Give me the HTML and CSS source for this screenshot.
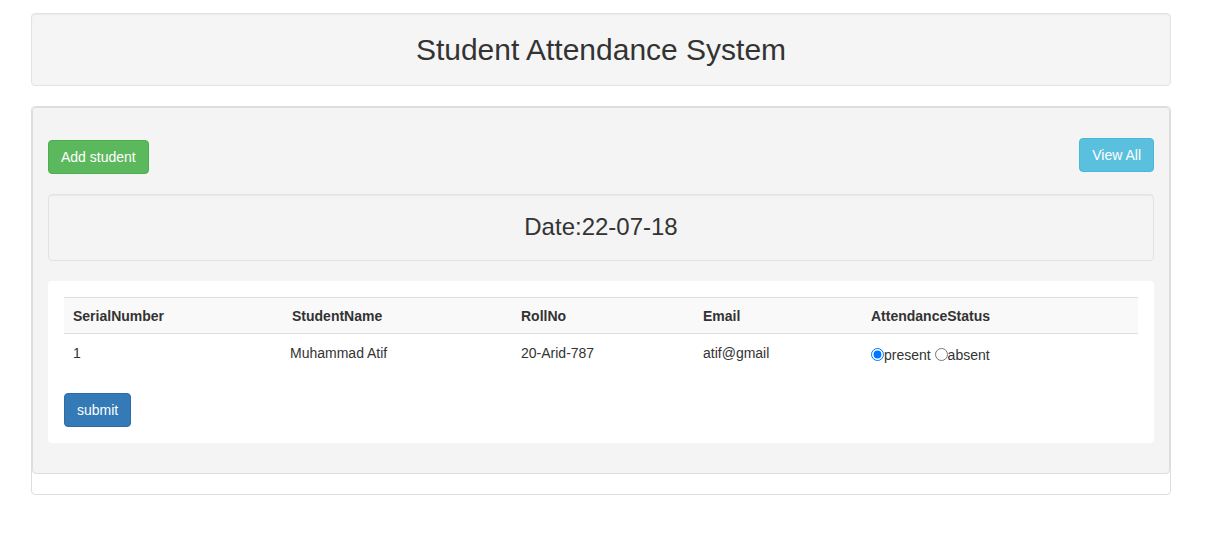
FILE: index.html
```html
<!DOCTYPE html>
<html>
<head>
<meta charset="utf-8">
<link rel="stylesheet" href="styles.css">
</head>
<body>
<div class="page">
  <div class="well header-well">
    <h1 class="title">Student Attendance System</h1>
  </div>
  <div class="outer-panel">
    <div class="well main-well">
      <div class="btn-row">
        <button class="btn btn-success add-btn">Add student</button>
        <button class="btn btn-info">View All</button>
      </div>
      <div class="well date-well">
        <h3 class="date">Date:22-07-18</h3>
      </div>
      <div class="white-panel">
        <table class="table">
          <thead>
            <tr>
              <th class="c1">SerialNumber</th>
              <th class="c2">StudentName</th>
              <th class="c3">RollNo</th>
              <th class="c4">Email</th>
              <th class="c5">AttendanceStatus</th>
            </tr>
          </thead>
          <tbody>
            <tr>
              <td>1</td>
              <td class="name">Muhammad Atif</td>
              <td>20-Arid-787</td>
              <td>atif@gmail</td>
              <td class="status"><input type="radio" name="s1" checked>present <input type="radio" name="s1">absent</td>
            </tr>
          </tbody>
        </table>
        <button class="btn btn-primary">submit</button>
      </div>
    </div>
  </div>
</div>
</body>
</html>
```

FILE: styles.css
```css
* { box-sizing: border-box; }
html, body { margin: 0; padding: 0; background: #fff; }
body {
  font-family: "Liberation Sans", Arial, Helvetica, sans-serif;
  font-size: 14px;
  line-height: 1.42857;
  color: #333;
}
.page {
  width: 1140px;
  margin-left: 31px;
  padding-top: 13px;
}
.well {
  background: #f5f5f5;
  border: 1px solid #e3e3e3;
  border-radius: 4px;
  box-shadow: inset 0 1px 1px rgba(0,0,0,0.05);
}
.header-well {
  height: 73px;
  display: flex;
  align-items: center;
  justify-content: center;
}
.title {
  margin: 0;
  font-size: 30px;
  font-weight: 400;
  line-height: 1.1;
  color: #333;
}
.outer-panel {
  margin-top: 20px;
  border: 1px solid #ddd;
  border-radius: 4px;
  padding-bottom: 20px;
}
.main-well {
  border: 1px solid #ddd;
  border-radius: 4px;
  background: #f4f4f4;
  padding: 30px 15px 30px 15px;
  box-shadow: none;
}
.btn-row {
  display: flex;
  justify-content: space-between;
  align-items: flex-start;
  height: 36px;
}
.btn {
  font-family: "Liberation Sans", Arial, Helvetica, sans-serif;
  font-size: 14px;
  line-height: 20px;
  padding: 6px 12px;
  border: 1px solid transparent;
  border-radius: 4px;
  color: #fff;
  cursor: pointer;
  height: 34px;
}
.add-btn { margin-top: 2px; }
.btn-success { background: #5cb85c; border-color: #4cae4c; }
.btn-info { background: #5bc0de; border-color: #46b8da; }
.btn-primary { background: #337ab7; border-color: #2e6da4; }
.date-well {
  margin-top: 20px;
  height: 67px;
  display: flex;
  align-items: center;
  justify-content: center;
  background: #f4f4f4;
}
.date {
  margin: 0;
  font-size: 24px;
  font-weight: 400;
  line-height: 1.1;
  color: #333;
}
.white-panel {
  margin-top: 20px;
  background: #fff;
  border-radius: 4px;
  padding: 16px 16px 16px 16px;
}
.table {
  width: 100%;
  border-collapse: collapse;
  border-spacing: 0;
  margin-bottom: 22px;
}
.table th {
  text-align: left;
  font-weight: 700;
  padding: 8px 8px 7px 9px;
  line-height: 20px;
  background: #f9f9f9;
  border-top: 1px solid #ddd;
  border-bottom: 1px solid #ddd;
}
.table td {
  padding: 9px 8px 8px 9px;
  line-height: 20px;
  vertical-align: top;
}
.table td.name { padding-left: 7px; }
.c1 { width: 219px; }
.c2 { width: 229px; }
.c3 { width: 182px; }
.c4 { width: 168px; }
.status {
  font-family: Arial, "Liberation Sans", sans-serif;
}
.table td.status { padding-top: 11px; padding-bottom: 6px; padding-left: 9px; }
.status input {
  margin: 0;
  width: 13px;
  height: 13px;
  vertical-align: -1px;
}
```
